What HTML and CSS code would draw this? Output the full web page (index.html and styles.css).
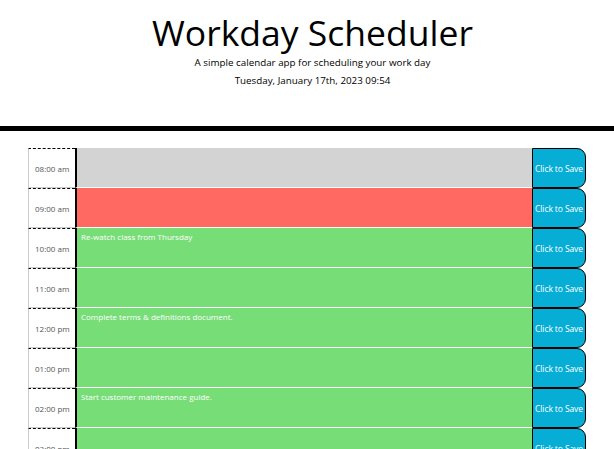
FILE: index.html
```html
<!DOCTYPE html>
<html lang="en">
<head>
<meta charset="utf-8">
<title>Workday Scheduler</title>
<link rel="stylesheet" href="styles.css">
</head>
<body>
<header class="jumbotron">
  <h1 class="title">Workday Scheduler</h1>
  <p class="lead">A simple calendar app for scheduling your work day</p>
  <p class="current-day">Tuesday, January 17th, 2023 09:54</p>
</header>
<main class="container">
  <div class="time-block">
    <div class="hour">08:00 am</div>
    <textarea class="description past"></textarea>
    <button class="save-btn">Click to Save</button>
  </div>
  <div class="time-block">
    <div class="hour">09:00 am</div>
    <textarea class="description present"></textarea>
    <button class="save-btn">Click to Save</button>
  </div>
  <div class="time-block">
    <div class="hour">10:00 am</div>
    <textarea class="description future">Re-watch class from Thursday</textarea>
    <button class="save-btn">Click to Save</button>
  </div>
  <div class="time-block">
    <div class="hour">11:00 am</div>
    <textarea class="description future"></textarea>
    <button class="save-btn">Click to Save</button>
  </div>
  <div class="time-block">
    <div class="hour">12:00 pm</div>
    <textarea class="description future">Complete terms &amp; definitions document.</textarea>
    <button class="save-btn">Click to Save</button>
  </div>
  <div class="time-block">
    <div class="hour">01:00 pm</div>
    <textarea class="description future"></textarea>
    <button class="save-btn">Click to Save</button>
  </div>
  <div class="time-block">
    <div class="hour">02:00 pm</div>
    <textarea class="description future">Start customer maintenance guide.</textarea>
    <button class="save-btn">Click to Save</button>
  </div>
  <div class="time-block">
    <div class="hour">03:00 pm</div>
    <textarea class="description future"></textarea>
    <button class="save-btn">Click to Save</button>
  </div>
  <div class="time-block">
    <div class="hour">04:00 pm</div>
    <textarea class="description future"></textarea>
    <button class="save-btn">Click to Save</button>
  </div>
  <div class="time-block">
    <div class="hour">05:00 pm</div>
    <textarea class="description future"></textarea>
    <button class="save-btn">Click to Save</button>
  </div>
</main>
</body>
</html>
```
FILE: styles.css
```css
html, body {
  margin: 0;
  padding: 0;
  background: #ffffff;
  font-family: "Open Sans", "Liberation Sans", sans-serif;
  color: #000000;
}

.jumbotron {
  text-align: center;
  padding-top: 12px;
  padding-left: 11px;
  height: 114px;
  box-sizing: content-box;
  border-bottom: 5px solid #000000;
}

.title {
  margin: 0;
  font-size: 35.5px;
  font-weight: 400;
  line-height: 40px;
  color: #000000;
}

.lead {
  margin: 3px 0 0 0;
  font-size: 9.8px;
  line-height: 16px;
}

.current-day {
  margin: 2px 0 0 0;
  font-size: 9.8px;
  line-height: 16px;
}

.container {
  margin: 17px 0 0 28px;
  width: 558px;
}

.time-block {
  display: flex;
  height: 40px;
}

.hour {
  width: 47px;
  box-sizing: border-box;
  border-top: 1px dashed #000000;
  border-left: 1px solid #cccccc;
  border-bottom: 1px solid #cccccc;
  display: flex;
  align-items: center;
  padding-left: 6px;
  font-size: 8px;
  color: #555555;
  background: #ffffff;
}

.description {
  flex: 1;
  box-sizing: border-box;
  margin: 0;
  height: 40px;
  border: none;
  border-left: 2px solid #000000;
  border-bottom: 1px solid #ffffff;
  padding: 3px 4px;
  resize: none;
  font-family: "Open Sans", "Liberation Sans", sans-serif;
  font-size: 8px;
  line-height: 11px;
  color: #ffffff;
  outline: none;
}

.past { background: #d3d3d3; }
.present { background: #ff6961; }
.future { background: #77dd77; }

.save-btn {
  width: 54px;
  height: 40px;
  box-sizing: border-box;
  margin: 0;
  padding: 0;
  border: 1px solid #000000;
  border-radius: 0 9px 9px 0;
  background: #06aed5;
  color: #ffffff;
  font-family: "Open Sans", "Liberation Sans", sans-serif;
  font-size: 8.5px;
  letter-spacing: -0.1px;
}
```
